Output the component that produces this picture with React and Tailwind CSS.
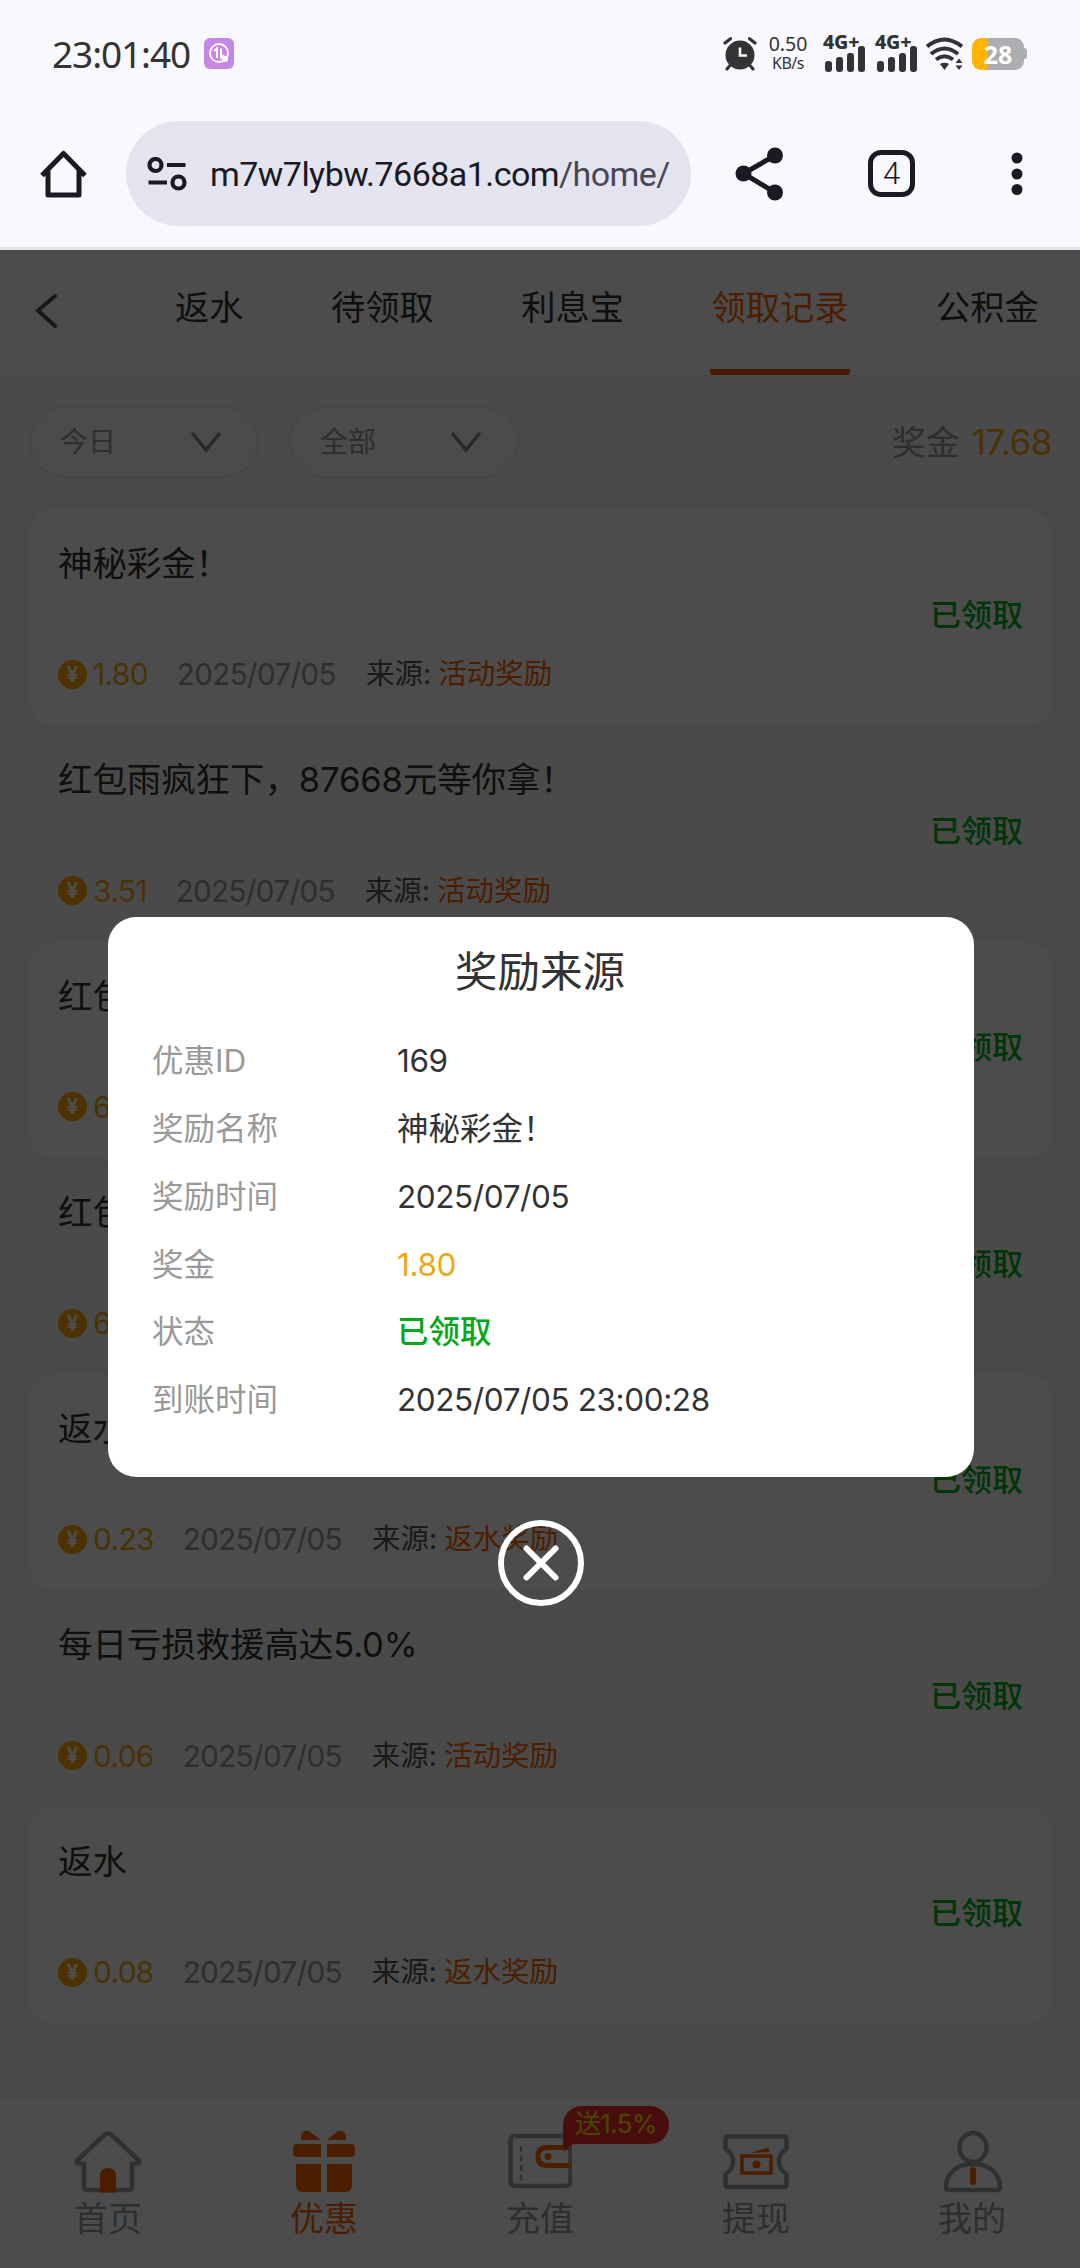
import React from "react";

const tabs = ["返水", "待领取", "利息宝", "领取记录", "公积金"];

const records = [
    { title: "神秘彩金！", amount: "1.80", source: "活动奖励" },
    { title: "红包雨疯狂下，87668元等你拿！", amount: "3.51", source: "活动奖励" },
    { title: "红包雨疯狂下，87668元等你拿！", amount: "6.00", source: "活动奖励" },
    { title: "红包雨疯狂下，87668元等你拿！", amount: "6.00", source: "活动奖励" },
    { title: "返水", amount: "0.23", source: "返水奖励" },
    { title: "每日亏损救援高达5.0%", amount: "0.06", source: "活动奖励" },
    { title: "返水", amount: "0.08", source: "返水奖励" },
];

const details = [
    { label: "优惠ID", value: "169", style: "text-[#333]" },
    { label: "奖励名称", value: "神秘彩金！", style: "text-[#333] tracking-normal" },
    { label: "奖励时间", value: "2025/07/05", style: "text-[#333]" },
    { label: "奖金", value: "1.80", style: "text-[#eaa914]" },
    { label: "状态", value: "已领取", style: "text-[#04a818] font-medium tracking-normal" },
    { label: "到账时间", value: "2025/07/05 23:00:28", style: "text-[#333]" },
];

function Signal() {
    return (
        <div className="w-[42px] h-[37px] flex flex-col">
            <span className="text-[19.500px] leading-[14px] font-extrabold tracking-[-0.2px] font-['Noto_Sans']">4G+</span>
            <svg className="-mt-[3px] ml-[2px] shrink-0" width="40" height="26" viewBox="0 0 40 26" fill="currentColor">
                <rect x="0" y="15" width="7" height="11" rx="3" />
                <rect x="11" y="11" width="7" height="15" rx="3" />
                <rect x="22" y="7" width="7" height="19" rx="3" />
                <rect x="33" y="0" width="7" height="26" rx="3" />
            </svg>
        </div>
    );
}

function StatusBar() {
    return (
        <div className="h-[107px] flex items-center justify-between pl-[52px] pr-[53px] text-[#333] font-['Noto_Sans']">
            <div className="flex items-center gap-[14px]">
                <span className="text-[37px] leading-none tracking-[-1.1px]">23:01:40</span>
                <svg width="30" height="31" viewBox="0 0 30 31" fill="none">
                    <rect width="30" height="31" rx="6" fill="#c586e4" />
                    <circle cx="15" cy="15" r="9" stroke="#fff" strokeWidth="1.8" />
                    <path d="M10 13 13 10.500v9.500M17 10.500v9l3-2.500" stroke="#fff" strokeWidth="2" />
                    <circle cx="21" cy="21" r="3" fill="#fff" />
                </svg>
            </div>
            <div className="flex items-center">
                <svg width="34" height="34" viewBox="0 0 34 34" fill="none" stroke="#333" strokeLinecap="round">
                    <circle cx="17" cy="18" r="14.500" fill="#333" stroke="none" />
                    <path d="M2 6 7.500 1.800M32 6l-5.500-4.200M6.500 29 4 32M27.500 29l2.500 3" strokeWidth="3.200" />
                    <path d="M17 10.500v8h7" stroke="#f9f8fe" strokeWidth="2.600" strokeLinecap="butt" />
                </svg>
                <div className="w-[40px] ml-[11px] flex flex-col items-center">
                    <span className="text-[19.500px] leading-[20px]">0.50</span>
                    <span className="text-[16px] leading-[19px] tracking-[-0.5px]">KB/s</span>
                </div>
                <div className="flex gap-[10px] ml-[15px]">
                    <Signal />
                    <Signal />
                </div>
                <svg className="ml-[9px]" width="38" height="34" viewBox="0 0 38 34" fill="none" stroke="#333" strokeWidth="4">
                    <path d="M1 9.500Q18.500-4.500 36 9.500M5 17Q18.500 6 32 17M10 22.500Q18.500 16 27 22.500" />
                    <path d="M14 27Q18.500 24.500 23 27L18.500 33ZM29.500 26h7L33 21.500ZM29.500 28.500h7L33 33Z" fill="#333" stroke="none" />
                </svg>
                <div className="ml-[8px] flex items-center">
                    <div className="w-[52px] h-[32px] rounded-[9px] bg-linear-to-r from-[#ffb400] from-28% to-[#adadb2] to-30% text-white text-[25px] leading-[32px] font-bold text-center">28</div>
                    <div className="w-[3px] h-[11px] bg-[#adadb2] rounded-r-sm" />
                </div>
            </div>
        </div>
    );
}

function BrowserBar() {
    return (
        <div className="h-[143px] flex items-start pt-[14px] pl-[40px] border-b-[3px] border-[#e3e3ea] text-[#191a24]">
            <svg className="mt-[29px] shrink-0" width="47" height="48" viewBox="0 0 47 48" fill="none" stroke="currentColor" strokeWidth="5" strokeLinejoin="round">
                <path d="M2 25.500 23.500 3.500 45 25.500M8 20v25h31V20" />
            </svg>
            <div className="w-[565px] h-[105px] ml-[39px] rounded-full bg-[#e4e4f0] flex items-center pl-[21px]">
                <svg className="shrink-0" width="40" height="34" viewBox="0 0 40 34" fill="none" stroke="currentColor" strokeWidth="4.200">
                    <circle cx="8.500" cy="8" r="6" />
                    <circle cx="31.500" cy="25.500" r="6" />
                    <path d="M20 8h18.500M1.500 25.500H20" />
                </svg>
                <span className="ml-[23px] text-[34px] leading-none tracking-[-0.55px] whitespace-nowrap font-['Roboto']">
                    m7w7lybw.7668a1.com<span className="text-[#484853]">/home/</span>
                </span>
            </div>
            <svg className="mt-[26px] ml-[44px] shrink-0" width="49" height="54" viewBox="0 0 49 54" fill="currentColor">
                <path d="M40 8.500 8.500 26.500 40 45.500" fill="none" stroke="currentColor" strokeWidth="5" />
                <circle cx="8.500" cy="26.500" r="8" />
                <circle cx="40" cy="8.500" r="8" />
                <circle cx="40" cy="45.500" r="8" />
            </svg>
            <div className="mt-[29px] ml-[84px] w-[47px] h-[47px] rounded-[13px] border-[5px] border-current flex items-center justify-center text-[31px] leading-none font-light font-['Roboto']">4</div>
            <svg className="mt-[30px] ml-[96px]" width="12" height="46" viewBox="0 0 12 46" fill="currentColor">
                <circle cx="6" cy="7" r="5.500" />
                <circle cx="6" cy="23" r="5.500" />
                <circle cx="6" cy="38.500" r="5.500" />
            </svg>
        </div>
    );
}

function Tabs() {
    return (
        <div className="h-[127px] flex items-start bg-white border-b-2 border-[#eee] whitespace-nowrap">
            <svg className="mt-[42px] ml-[34px] shrink-0" width="26" height="38" viewBox="0 0 26 38" fill="none" stroke="#555" strokeWidth="4" strokeLinecap="round">
                <path d="M21 4 4 18.500 21 34" />
            </svg>
            <div className="flex gap-[83.700px] ml-[113px]">
                {tabs.map((tab) => (
                    <div
                        key={tab}
                        className={
                            tab === "领取记录"
                                ? "h-[125px] px-[2px] text-[34.200px] leading-[116px] text-[#ff6600] border-b-[6px] border-[#e65c00] rounded-b-[3px]"
                                : "h-[125px] px-[2px] text-[34.200px] leading-[116px] text-[#333]"
                        }
                    >
                        {tab}
                    </div>
                ))}
            </div>
        </div>
    );
}

function Select({ text }) {
    return (
        <div className="w-[230px] h-[72px] rounded-full bg-[#fcfcfc] border-2 border-[#ececec] flex items-center justify-between pl-[29px] pr-[35px] text-[28px] text-[#999]">
            {text}
            <svg width="32" height="22" viewBox="0 0 32 22" fill="none" stroke="#888" strokeWidth="3.500" strokeLinecap="round">
                <path d="M3 3 16 19 29 3" />
            </svg>
        </div>
    );
}

function RecordCard({ title, amount, source, raised }) {
    return (
        <div
            className={
                raised
                    ? "h-[216.300px] px-[29px] rounded-[24px] bg-[#fdfdfd] shadow-[0_0_14px_rgba(0,0,0,0.04)] flex items-center justify-between"
                    : "h-[216.300px] px-[29px] flex items-center justify-between"
            }
        >
            <div className="h-full flex flex-col justify-between pt-[31px] pb-[31px]">
                <div className="text-[34.500px] leading-[48px] text-[#333] tracking-[-0.1px]">{title}</div>
                <div className="flex items-center leading-[40px]">
                    <span className="w-[29px] h-[29px] rounded-full bg-[#ffa800] text-white text-[21px] leading-[29px] font-bold text-center">¥</span>
                    <span className="ml-[6px] text-[30px] text-[#f5ac14] tracking-[-0.7px]">{amount}</span>
                    <span className="ml-[29px] text-[29.500px] text-[#999] tracking-[-0.6px]">2025/07/05</span>
                    <span className="ml-[30px] text-[28.500px] text-[#555]">来源:</span>
                    <span className="ml-[7px] text-[28.500px] text-[#ff6600]">{source}</span>
                </div>
            </div>
            <span className="pb-[4px] text-[31px] text-[#00b31b] font-medium">已领取</span>
        </div>
    );
}

function NavItem({ label, active, children }) {
    return (
        <div className="relative flex-1 flex flex-col items-center pt-[31px]">
            {children}
            <span className={active ? "mt-[2px] text-[34px] leading-[48px] text-[#ff6600]" : "mt-[2px] text-[34px] leading-[48px] text-[#999]"}>{label}</span>
        </div>
    );
}

function BottomNav() {
    return (
        <div className="h-[170px] flex bg-white shadow-[0_-2px_6px_rgba(0,0,0,0.03)]">
            <NavItem label="首页">
                <svg width="70" height="64" viewBox="0 0 70 64" fill="none" stroke="#a0a0a0" strokeWidth="4.500" strokeLinejoin="round" strokeLinecap="round">
                    <path d="M11 34.500H4.500Q2.500 33 4 31.500L32 5.500Q35 3 38 5.500L66 31.500Q67.500 33 65.500 34.500H59V58Q59 61 56 61H14Q11 61 11 58Z" />
                    <path d="M27 63.500V47Q27 39 35 39T43 47V63.500Z" fill="#ff6600" stroke="none" />
                </svg>
            </NavItem>
            <NavItem label="优惠" active>
                <svg width="64" height="64" viewBox="0 0 64 64" fill="#ff6600">
                    <path d="M9 11V7Q10 1 17 2L29 11ZM54 11V7Q53 1 46 2L35 11Z" />
                    <path d="M5 15H29V28H5Q1 28 1 24V19Q1 15 5 15ZM35 15H59Q63 15 63 19V24Q63 28 59 28H35Z" />
                    <path d="M4 35H29V63H10Q4 62 4 56ZM35 35H60V56Q60 62 54 63H35Z" />
                </svg>
            </NavItem>
            <NavItem label="充值">
                <svg width="64" height="64" viewBox="0 0 64 64" fill="none">
                    <rect x="2.500" y="7" width="60" height="50" rx="4" stroke="#a0a0a0" strokeWidth="4.500" />
                    <path d="M13 17v35" stroke="#a0a0a0" strokeWidth="2.500" strokeDasharray="6 3.500" />
                    <path d="M61 18.500H39Q30 18.500 30 27.500T39 36.500H61" stroke="#ff6600" strokeWidth="5" />
                    <circle cx="40" cy="27.500" r="3.500" fill="#ff6600" />
                </svg>
                <div className="absolute left-[131px] top-[8px] w-[106px] h-[38px] rounded-[19px] rounded-bl-none bg-[#f03030] text-[#ffe600] text-[26px] leading-[36px] text-center tracking-[-0.6px]">送1.5%</div>
                <svg className="absolute left-[131px] top-[45px]" width="14" height="9" viewBox="0 0 14 9">
                    <path d="M0 0H13Q5 2 1 9Z" fill="#f03030" />
                </svg>
            </NavItem>
            <NavItem label="提现">
                <svg width="66" height="64" viewBox="1 0 66 64" fill="none">
                    <path d="M6 7.500H62Q64.500 7.500 64.500 10V20Q57 24 57 32.500T64.500 45V55.500Q64.500 58 62 58H6Q3.500 58 3.500 55.500V45Q11 41 11 32.500T3.500 20V10Q3.500 7.500 6 7.500Z" stroke="#a0a0a0" strokeWidth="4.500" strokeLinejoin="round" />
                    <rect x="20" y="27" width="29" height="17" stroke="#ff6600" strokeWidth="3.500" />
                    <circle cx="34.500" cy="35.500" r="4" fill="#ff6600" />
                    <path d="M28 24 46 18.500 47.500 23" fill="#ff6600" />
                </svg>
            </NavItem>
            <NavItem label="我的">
                <svg width="62" height="64" viewBox="-1 0 62 64" fill="none">
                    <ellipse cx="31" cy="18.500" rx="13.500" ry="14.500" stroke="#a0a0a0" strokeWidth="4.500" />
                    <path d="M31 35C14 35 4 45 4 58Q4 61 7 61H55Q58 61 58 58C58 45 48 35 31 35Z" stroke="#a0a0a0" strokeWidth="4.500" />
                    <path d="M31 41V53" stroke="#ff6600" strokeWidth="6" strokeLinecap="round" />
                </svg>
            </NavItem>
        </div>
    );
}

function RewardDialog() {
    return (
        <div className="absolute inset-x-0 top-[250px] bottom-0 bg-black/70 flex flex-col items-center pt-[667px] pl-[2px]">
            <div className="w-[866px] h-[560px] rounded-[28px] bg-white px-[44px]">
                <h2 className="pt-[25px] pr-[2px] text-[42.500px] leading-[60px] text-center text-[#333]">奖励来源</h2>
                <div className="mt-[25px]">
                    {details.map(({ label, value, style }) => (
                        <div key={label} className="flex h-[67.800px] items-center text-[31.500px]">
                            <span className="w-[245px] text-[#999]">{label}</span>
                            <span className={`tracking-[-0.4px] ${style}`}>{value}</span>
                        </div>
                    ))}
                </div>
            </div>
            <svg className="mt-[42px] shrink-0" width="88" height="88" viewBox="0 0 88 88" fill="none" stroke="#fff" strokeWidth="6" strokeLinecap="round">
                <circle cx="44" cy="44" r="40" />
                <path d="M29.500 29.500 58.500 58.500M58.500 29.500 29.500 58.500" />
            </svg>
        </div>
    );
}

function App() {
    return (
        <div className="relative w-[1080px] h-[2268px] overflow-hidden flex flex-col bg-[#f8f8f8] font-['Inter','Noto_Sans_CJK_SC',sans-serif]">
            <div className="bg-[#f9f8fe]">
                <StatusBar />
                <BrowserBar />
            </div>
            <Tabs />
            <div className="flex items-center gap-[30px] pl-[29px] pr-[28px] pt-[29px]">
                <Select text="今日" />
                <Select text="全部" />
                <div className="ml-auto flex items-center gap-[12px] text-[34px] text-[#999]">
                    奖金 <span className="text-[35px] text-[#f5ac14] tracking-[-0.4px]">17.68</span>
                </div>
            </div>
            <div className="flex-1 pl-[29px] pr-[28px] pt-[31px]">
                {records.map((record, index) => (
                    <RecordCard key={index} {...record} raised={index % 2 === 0} />
                ))}
            </div>
            <BottomNav />
            <RewardDialog />
        </div>
    );
}

export default App;
